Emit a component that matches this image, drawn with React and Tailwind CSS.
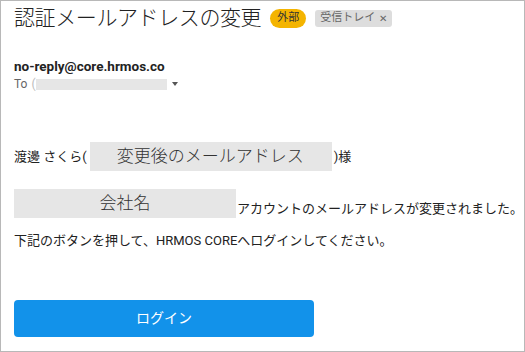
const font = { fontFamily: 'Roboto, "Noto Sans CJK JP", sans-serif' };

export default function App() {
  return (
    <div
      className="w-[525px] h-[352px] bg-white border border-[#b8b8b8] overflow-hidden text-[#222]"
      style={font}
    >
      {/* Subject */}
      <div className="flex items-center pl-[13px] pt-[2px] h-[32px]">
        <h1 className="text-[21px] font-light text-[#222] leading-none tracking-[-0.4px]">
          認証メールアドレスの変更
        </h1>
        <span className="ml-[9px] h-[19px] px-[7px] flex items-center rounded-full bg-[#f4b400] text-[11px] text-[#333]">
          外部
        </span>
        <span className="ml-[9px] h-[17px] px-[5px] flex items-center rounded-[3px] bg-[#dddddd] text-[11px] text-[#666]">
          受信トレイ
          <span className="ml-[4px] text-[10px]">✕</span>
        </span>
      </div>

      {/* Sender */}
      <div className="pl-[13px] pt-[24px]">
        <div className="text-[13.5px] font-bold leading-[18px] text-[#222]">
          no-reply@core.hrmos.co
        </div>
        <div className="flex items-center mt-[2px] h-[14px] text-[12px] text-[#666]">
          <span>To</span>
          <span className="ml-[4px] text-[#bbb]">(</span>
          <span className="w-[131px] h-[11px] bg-[#e6e6e6]"></span>
          <svg className="ml-[5px]" width="6" height="4" viewBox="0 0 6 4">
            <path d="M0 0h6L3 4z" fill="#555" />
          </svg>
        </div>
      </div>

      {/* Body */}
      <div className="pl-[13px] pt-[51px] text-[13px]">
        <div className="flex items-center h-[29px]">
          <span className="pr-[3px]">渡邊 さくら(</span>
          <span className="w-[242px] h-[29px] bg-[#e6e6e6] flex items-center pl-[27px] text-[17px] font-light text-[#333]">
            変更後のメールアドレス
          </span>
          <span className="ml-[2px]">)様</span>
        </div>
        <div className="flex items-end h-[29px] mt-[18px]">
          <span className="w-[222px] h-[29px] bg-[#e6e6e6] flex items-center justify-center text-[17px] font-light text-[#333]">
            会社名
          </span>
          <span className="ml-[1px] leading-[18px]">アカウントのメールアドレスが変更されました。</span>
        </div>
        <div className="mt-[14px] leading-[18px]">
          下記のボタンを押して、HRMOS COREへログインしてください。
        </div>
        <button className="mt-[50px] w-[300px] h-[37px] rounded-[4px] bg-[#1292ea] text-white text-[14px] flex items-center justify-center">
          ログイン
        </button>
      </div>
    </div>
  );
}
